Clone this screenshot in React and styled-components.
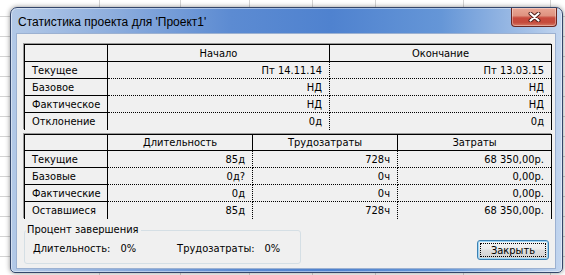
import styled, { createGlobalStyle } from 'styled-components';

const gridCols = [99, 180, 249, 312, 375, 463, 550]
  .map((x) => `linear-gradient(to right, transparent ${x}px, #d4d4d4 ${x}px, #d4d4d4 ${x + 1}px, transparent ${x + 1}px)`)
  .join(', ');

const GlobalStyle = createGlobalStyle`
  html, body {
    margin: 0;
    padding: 0;
  }
  body {
    width: 565px;
    height: 275px;
    overflow: hidden;
    background-color: #ffffff;
    background-image: ${gridCols},
      repeating-linear-gradient(to bottom, transparent 0, transparent 16px, #d4d4d4 16px, #d4d4d4 17px, transparent 17px, transparent 20px);
    font-family: "DejaVu Sans Condensed", "DejaVu Sans", sans-serif;
    font-size: 11px;
    color: #000;
  }
`;

const Window = styled.div`
  box-sizing: border-box;
  width: 553px;
  height: 266px;
  margin: 7px 0 0 10px;
  padding: 0 6px 3px 5px;
  display: flex;
  flex-direction: column;
  border: 1px solid #34466a;
  border-radius: 7px 7px 5px 5px;
  background: linear-gradient(to right, #b3c9e7 0%, #8eaedd 18%, #5c8bd2 40%, #4f82cf 58%, #6596d7 78%, #a5c1e7 94%, #c3d6ef 100%);
  box-shadow: 0 0 5px rgba(0, 0, 0, 0.45), inset 0 0 0 1px rgba(255, 255, 255, 0.45);
`;

const TitleBar = styled.div`
  height: 25px;
  display: flex;
  justify-content: space-between;
  align-items: flex-start;
  flex-shrink: 0;
`;

const Title = styled.div`
  padding: 7px 0 0 2px;
  font-family: "Liberation Sans", Arial, sans-serif;
  font-size: 12px;
  line-height: 14px;
  color: #000;
`;

const CloseButton = styled.div`
  box-sizing: border-box;
  width: 46px;
  height: 19px;
  margin-right: -1px;
  display: flex;
  align-items: center;
  justify-content: center;
  border: 1px solid #6b2620;
  border-top: none;
  border-radius: 0 0 4px 4px;
  background: linear-gradient(#eaa796 0%, #df9380 42%, #c84a3d 55%, #c54b3c 80%, #d57a66 100%);
  box-shadow: inset 0 0 0 1px rgba(255, 255, 255, 0.35);
`;

const Client = styled.div`
  flex: 1;
  box-sizing: border-box;
  padding: 10px 3px 0 7px;
  background: #f0f0f0;
  border: 1px solid #9cb1d1;
`;

const Grid = styled.div`
  box-sizing: border-box;
  width: 528px;
  display: grid;
  grid-template-columns: ${(p) => p.$cols};
  margin-top: ${(p) => p.$gap || 0}px;
  border: 1px solid #000;
  border-bottom: none;
  box-shadow: -1px -1px 0 #9a9a9a;
  background: #f0f0f0;
`;

const Cell = styled.div`
  box-sizing: border-box;
  height: ${(p) => p.$h || 17}px;
  padding: 0 7px;
  display: flex;
  align-items: center;
  justify-content: ${(p) => p.$align || 'flex-start'};
  white-space: nowrap;
  border-right: ${(p) => (p.$noRight ? 'none' : `1px ${p.$dotted ? 'dotted' : 'solid'} #000`)};
  border-bottom: ${(p) => (p.$noBottom ? 'none' : `1px ${p.$dotted ? 'dotted' : 'solid'} #000`)};
`;

const BottomRow = styled.div`
  width: 528px;
  margin-top: 5px;
  display: flex;
  justify-content: space-between;
  align-items: flex-end;
`;

const GroupBox = styled.fieldset`
  box-sizing: border-box;
  width: 277px;
  height: 40px;
  margin: 0;
  padding: 0 4px;
  border: 1px solid #d5dfe5;
  border-radius: 3px;
`;

const GroupLabel = styled.legend`
  padding: 0 2px 0 1px;
  margin-left: -3px;
  line-height: 12px;
`;

const StatRow = styled.div`
  display: flex;
  gap: 41px;
  margin: 6px 0 0 4px;
`;

const Stat = styled.div`
  display: flex;
  gap: 10px;
`;

const Button = styled.button`
  box-sizing: border-box;
  width: 72px;
  height: 20px;
  margin: 0 3px 4px 0;
  padding: 0;
  font: inherit;
  color: #000;
  border: 1px solid #3c7fb1;
  border-radius: 3px;
  background: linear-gradient(#f4f4f4 0%, #ececec 45%, #dedede 50%, #d2d2d2 100%);
  box-shadow: inset 0 0 0 1px #9ed8f8;
  outline: 1px dotted #000;
  outline-offset: -4px;
`;

const top = {
  cols: '83px 222px 221px',
  head: ['Начало', 'Окончание'],
  rows: [
    ['Текущее', 'Пт 14.11.14', 'Пт 13.03.15'],
    ['Базовое', 'НД', 'НД'],
    ['Фактическое', 'НД', 'НД'],
    ['Отклонение', '0д', '0д'],
  ],
};

const bottom = {
  cols: '83px 145px 145px 153px',
  head: ['Длительность', 'Трудозатраты', 'Затраты'],
  rows: [
    ['Текущие', '85д', '728ч', '68 350,00р.'],
    ['Базовые', '0д?', '0ч', '0,00р.'],
    ['Фактические', '0д', '0ч', '0,00р.'],
    ['Оставшиеся', '85д', '728ч', '68 350,00р.'],
  ],
};

function StatsGrid({ data, headH, gap }) {
  const last = data.rows.length - 1;
  return (
    <Grid $cols={data.cols} $gap={gap}>
      <Cell $h={headH} />
      {data.head.map((h, i) => (
        <Cell key={h} $h={headH} $align="center" $noRight={i === data.head.length - 1}>
          {h}
        </Cell>
      ))}
      {data.rows.map((row, r) =>
        row.map((v, c) =>
          c === 0 ? (
            <Cell key={`${r}-${c}`} $noBottom={r === last}>{v}</Cell>
          ) : (
            <Cell
              key={`${r}-${c}`}
              $dotted
              $align="flex-end"
              $noBottom={r === last}
              $noRight={c === row.length - 1}
            >
              {v}
            </Cell>
          )
        )
      )}
    </Grid>
  );
}

export default function App() {
  return (
    <>
      <GlobalStyle />
      <Window>
        <TitleBar>
          <Title>Статистика проекта для 'Проект1'</Title>
          <CloseButton>
            <svg width="13" height="10" viewBox="0 0 13 10">
              <path d="M2.5 1.5 L10.5 8.5 M10.5 1.5 L2.5 8.5" stroke="#4a1a16" strokeWidth="4" strokeLinecap="round" />
              <path d="M2.5 1.5 L10.5 8.5 M10.5 1.5 L2.5 8.5" stroke="#fff" strokeWidth="2.2" strokeLinecap="round" />
            </svg>
          </CloseButton>
        </TitleBar>
        <Client>
          <StatsGrid data={top} headH={17} />
          <StatsGrid data={bottom} headH={16} gap={4} />
          <BottomRow>
            <GroupBox>
              <GroupLabel>Процент завершения</GroupLabel>
              <StatRow>
                <Stat>
                  <span>Длительность:</span>
                  <span>0%</span>
                </Stat>
                <Stat>
                  <span>Трудозатраты:</span>
                  <span>0%</span>
                </Stat>
              </StatRow>
            </GroupBox>
            <Button>Закрыть</Button>
          </BottomRow>
        </Client>
      </Window>
    </>
  );
}
